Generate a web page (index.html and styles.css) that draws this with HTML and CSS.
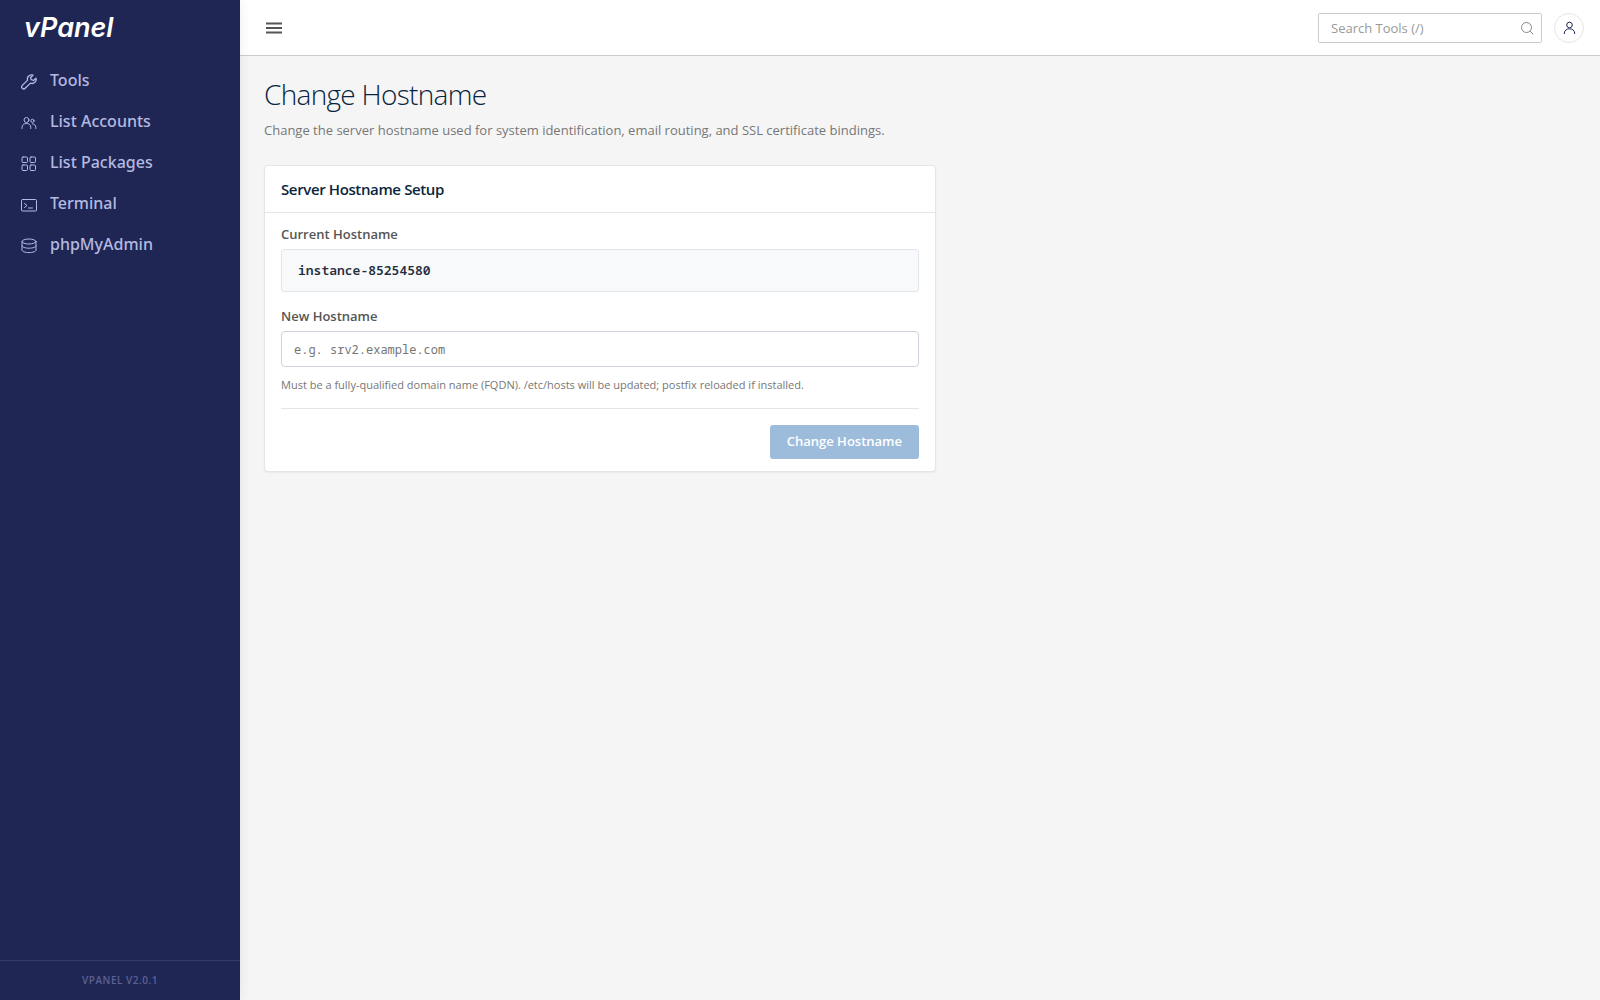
FILE: index.html
```html
<!DOCTYPE html>
<html lang="en">
<head>
<meta charset="utf-8">
<meta name="viewport" content="width=device-width, initial-scale=1">
<title>Change Hostname - vPanel</title>
<link rel="stylesheet" href="styles.css">
</head>
<body>
<div class="app">
  <aside class="sidebar">
    <a class="brand" href="#">vPanel</a>
    <nav class="nav" aria-label="Main">
      <a class="nav-link" href="#">
        <svg class="icon" viewBox="0 0 16 16" aria-hidden="true"><path stroke-width="1.300" d="M10.500.9a4 4 0 0 0-3.900 5.200L1.300 11.400a2 2 0 0 0 2.900 2.900l5.300-5.200a4.100 4.100 0 0 0 5.500-5L12.500 6.500 10.300 5.700 9.500 3.500 12 1.200a4 4 0 0 0-1.500-.3z"/></svg>
        <span>Tools</span>
      </a>
      <a class="nav-link" href="#">
        <svg class="icon" viewBox="0 0 16 16" aria-hidden="true"><circle cx="5.500" cy="5" r="2.500"/><path d="M1 13.500V12.500C1 10 2.800 8.500 5.500 8.500S9.800 10 9.800 12.500v1"/><circle cx="11.500" cy="5.800" r="1.600"/><path d="M11.300 8.800c2.200 0 3.500 1.500 3.500 3.500v1.200"/></svg>
        <span>List Accounts</span>
      </a>
      <a class="nav-link" href="#">
        <svg class="icon" viewBox="0 0 16 16" aria-hidden="true"><rect x="1" y="1" width="5.500" height="5.500" rx="1"/><rect x="9" y="1" width="5.500" height="5.500" rx="1"/><rect x="1" y="9" width="5.500" height="5.500" rx="1"/><rect x="9" y="9" width="5.500" height="5.500" rx="1"/></svg>
        <span>List Packages</span>
      </a>
      <a class="nav-link" href="#">
        <svg class="icon" viewBox="0 0 16 16" aria-hidden="true"><rect x=".5" y="2.500" width="15" height="11.500" rx="1"/><path d="M3.500 6.500 6 8.500 3.500 10.500M7.500 11h4"/></svg>
        <span>Terminal</span>
      </a>
      <a class="nav-link" href="#">
        <svg class="icon" viewBox="0 0 16 16" aria-hidden="true"><ellipse cx="8" cy="3.500" rx="7" ry="2.500"/><path d="M1 3.500v8.500c0 1.500 3.100 2.600 7 2.600s7-1.100 7-2.600V3.500M1 7.700c0 1.500 3.100 2.500 7 2.500s7-1 7-2.500"/></svg>
        <span>phpMyAdmin</span>
      </a>
    </nav>
    <footer class="version">VPANEL V2.0.1</footer>
  </aside>
  <div class="main">
    <header class="topbar">
      <button class="menu-button" type="button" aria-label="Toggle menu">
        <svg class="menu-icon" viewBox="0 0 16 12" aria-hidden="true"><path d="M0 1.500h16M0 6h16M0 10.500h16"/></svg>
      </button>
      <div class="topbar-tools">
        <label class="search">
          <input class="search-input" type="text" placeholder="Search Tools (/)" aria-label="Search Tools">
          <svg class="search-icon" viewBox="0 0 14 14" aria-hidden="true"><circle cx="6.500" cy="6.500" r="5"/><path d="m10.200 10.200 3 3"/></svg>
        </label>
        <button class="avatar" type="button" aria-label="Account">
          <svg class="avatar-icon" viewBox="0 0 14 14" aria-hidden="true"><circle cx="7.500" cy="4" r="2.800"/><path d="M2.200 13c0-3.500 2.300-5.200 5.300-5.200s5.300 1.700 5.300 5.200"/></svg>
        </button>
      </div>
    </header>
    <main class="content">
      <h1 class="title">Change Hostname</h1>
      <p class="subtitle">Change the server hostname used for system identification, email routing, and SSL certificate bindings.</p>
      <section class="card">
        <h2 class="card-title">Server Hostname Setup</h2>
        <form class="card-body">
          <div class="label">Current Hostname</div>
          <div class="current">instance-85254580</div>
          <label class="label" for="hostname">New Hostname</label>
          <input class="host-input" id="hostname" type="text" placeholder="e.g. srv2.example.com">
          <p class="hint">Must be a fully-qualified domain name (FQDN). /etc/hosts will be updated; postfix reloaded if installed.</p>
          <div class="actions">
            <button class="submit" type="submit" disabled>Change Hostname</button>
          </div>
        </form>
      </section>
    </main>
  </div>
</div>
</body>
</html>
```
FILE: styles.css
```css
*, *::before, *::after { box-sizing: border-box; }

body {
  margin: 0;
  background: #f5f5f5;
  color: #555;
  font-family: "Open Sans", "Noto Sans", sans-serif;
  font-size: 13px;
  line-height: 20px;
}

button, input { font: inherit; }

.app { display: flex; min-height: 100vh; }

.sidebar {
  z-index: 1;
  display: flex;
  flex: 0 0 240px;
  flex-direction: column;
  background: #1f2654;
  box-shadow: 0 0 12px rgba(0, 0, 0, .08);
}

.brand {
  display: flex;
  align-items: center;
  height: 56px;
  padding-left: 24px;
  color: #fff;
  font-family: Inter, "Liberation Sans", sans-serif;
  font-size: 27px;
  font-style: italic;
  font-weight: 600;
  text-decoration: none;
}

.nav { display: flex; flex-direction: column; gap: 1px; padding-top: 4px; }

.nav-link {
  display: flex;
  align-items: center;
  gap: 13px;
  height: 40px;
  padding: 0 21px;
  color: #b4bae0;
  font-family: "Noto Sans", "Open Sans", sans-serif;
  font-size: 16px;
  font-weight: 500;
  text-decoration: none;
}

.icon {
  width: 16px;
  height: 16px;
  margin-top: 4px;
  fill: none;
  stroke: currentColor;
  stroke-linecap: round;
  stroke-linejoin: round;
}

.version {
  margin-top: auto;
  padding: 9px 0 10px;
  border-top: 1px solid #363c67;
  color: #5b6194;
  font-size: 10px;
  font-weight: 600;
  letter-spacing: 0.05em;
  text-align: center;
}

.main { flex: 1; min-width: 0; }

.topbar {
  display: flex;
  align-items: center;
  justify-content: space-between;
  height: 56px;
  padding: 0 16px 0 24px;
  border-bottom: 1px solid #ccc;
  background: #fff;
}

.menu-button { display: flex; padding: 2px; border: 0; background: none; }
.menu-icon { width: 16px; height: 12px; stroke: #555; stroke-width: 2; }

.topbar-tools { display: flex; align-items: center; gap: 12px; }

.search {
  display: flex;
  align-items: center;
  width: 224px;
  height: 30px;
  padding: 0 7px 0 12px;
  border: 1px solid #ccc;
  border-radius: 2px;
}

.search-input { flex: 1; min-width: 0; padding: 0; border: 0; background: none; outline: 0; }
.search-input::placeholder { color: #999; }
.search-icon { width: 14px; height: 14px; fill: none; stroke: #888; }

.avatar {
  display: flex;
  align-items: center;
  justify-content: center;
  width: 30px;
  height: 30px;
  padding: 0;
  border: 1px solid #e5e5e5;
  border-radius: 50%;
  background: #fff;
}

.avatar-icon { width: 14px; height: 14px; fill: none; stroke: #1f2654; }

.content { padding: 18px 24px; }

.title {
  margin: 0;
  color: #0a2540;
  font-size: 28px;
  font-weight: 300;
  letter-spacing: -0.025em;
  line-height: 40px;
}

.subtitle { margin: 6px 0 25px; color: #777; }

.card {
  max-width: 672px;
  border: 1px solid #e5e5e8;
  border-radius: 4px;
  background: #fff;
  box-shadow: 0 1px 2px rgba(0, 0, 0, .05);
}

.card-title {
  margin: 0;
  padding: 13px 16px;
  border-bottom: 1px solid #e5e5e8;
  color: #0a2540;
  font-size: 15px;
  font-weight: 600;
  letter-spacing: -0.025em;
  line-height: 20px;
}

.card-body { padding: 12px 16px; }

.label { display: block; margin-bottom: 5px; font-weight: 600; line-height: 19px; }

.current {
  margin-bottom: 15px;
  padding: 11px 16px;
  border: 1px solid #e2e5ec;
  border-radius: 3px;
  background: #f8f9fb;
  color: #1f2d3d;
  font-family: "Noto Sans Mono", "Droid Sans Mono", "DejaVu Sans Mono", monospace;
  font-weight: 600;
  line-height: 19px;
}

.host-input {
  display: block;
  width: 100%;
  height: 36px;
  padding: 0 12px;
  border: 1px solid #ced3dc;
  border-radius: 4px;
  background: #fff;
  font-family: "Noto Sans Mono", "Droid Sans Mono", "DejaVu Sans Mono", monospace;
  font-size: 12px;
}

.host-input::placeholder { color: #757575; }

.hint { margin: 8px 0 13px; color: #777; font-size: 11px; }

.actions {
  display: flex;
  justify-content: flex-end;
  padding-top: 16px;
  border-top: 1px solid #e5e5e8;
}

.submit {
  height: 34px;
  padding: 0 17px 2px;
  border: 0;
  border-radius: 3px;
  background: #9dbcdc;
  color: #fff;
  font-weight: 600;
}
```
